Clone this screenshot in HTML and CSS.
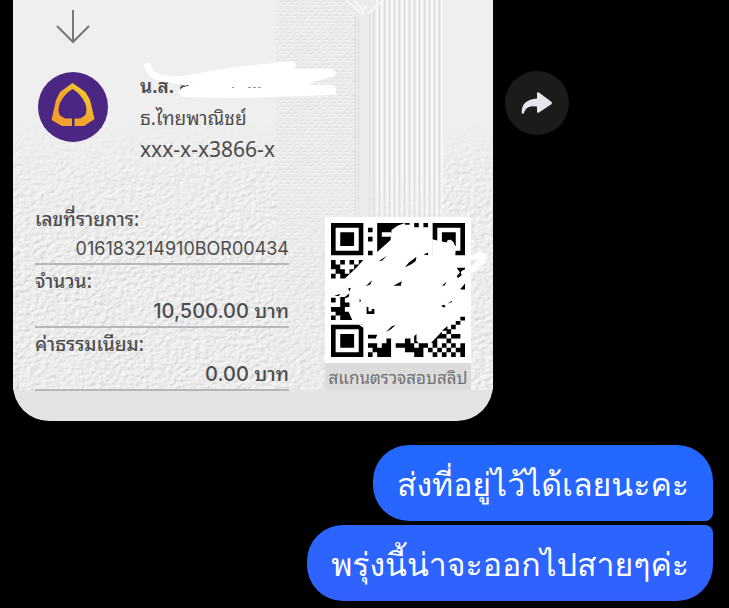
FILE: index.html
```html
<!DOCTYPE html>
<html lang="th">
<head>
<meta charset="utf-8">
<meta name="viewport" content="width=device-width, initial-scale=1">
<title>แชท</title>
<link rel="stylesheet" href="styles.css">
</head>
<body>
<main class="chat">
  <div class="received">
    <article class="slip">
      <svg class="texture" viewBox="0 0 480 390" preserveAspectRatio="none" aria-hidden="true">
        <defs>
          <filter id="relief" x="0" y="0" width="100%" height="100%" color-interpolation-filters="sRGB">
            <feTurbulence type="fractalNoise" baseFrequency="0.2 0.26" numOctaves="3" seed="8"/>
            <feColorMatrix values="0 0 0 0 0  0 0 0 0 0  0 0 0 0 0  1 0 0 0 0"/>
            <feDiffuseLighting surfaceScale="0.7" diffuseConstant="1.04" lighting-color="#efefef">
              <feDistantLight azimuth="225" elevation="72"/>
            </feDiffuseLighting>
          </filter>
          <linearGradient id="fade" x1="0" y1="0" x2="0" y2="1">
            <stop offset="0.31" stop-color="#000"/>
            <stop offset="0.45" stop-color="#bbb"/>
            <stop offset="0.65" stop-color="#fff"/>
          </linearGradient>
          <mask id="low"><rect width="480" height="390" fill="url(#fade)"/></mask>
          <linearGradient id="down" x1="0" y1="0" x2="0" y2="1">
            <stop offset="0.45" stop-color="#fff"/>
            <stop offset="0.65" stop-color="#777"/>
            <stop offset="1" stop-color="#222"/>
          </linearGradient>
          <mask id="high"><rect width="480" height="390" fill="url(#down)"/></mask>
          <pattern id="weave" width="7" height="7" patternUnits="userSpaceOnUse">
            <path d="M0 2l4-1M3 5l4-1" stroke="#dcdcdc"/><path d="M0 3l4-1M3 6l4-1" stroke="#f5f5f5"/>
          </pattern>
          <pattern id="ribs" width="5" height="9" patternUnits="userSpaceOnUse">
            <path d="M1.500 0v9" stroke="#dcdcdc"/><path d="M4 0v9" stroke="#f6f6f6" stroke-width="2"/>
          </pattern>
        </defs>
        <rect width="480" height="390" fill="#efefef"/>
        <rect width="480" height="390" filter="url(#relief)" mask="url(#low)"/>
        <g mask="url(#high)">
          <rect x="263" width="79" height="390" fill="#ebebeb"/>
          <rect x="263" width="79" height="390" fill="url(#weave)"/>
          <rect x="342" width="88" height="390" fill="#ebebeb"/>
          <rect x="362" width="68" height="390" fill="url(#ribs)"/>
          <path d="M342.500 17v373M345.500 20v370M356.500 15v375M360.500 10v380" stroke="#dcdcdc" fill="none"/>
          <path d="M333 0l16 14 5-10M341 0l8 9M370 0l-14 13" stroke="#f7f7f7" stroke-width="2" fill="none"/>
        </g>
      </svg>

      <div class="slip-body">
        <section class="payee">
          <div class="payee-marks">
            <svg class="arrow" viewBox="0 0 34 34" aria-hidden="true"><path d="M17 0v32M1 16l16 16 16-16"/></svg>
            <svg class="bank" viewBox="0 0 70 70" role="img" aria-label="ไทยพาณิชย์">
              <defs><linearGradient id="gold" x1="0" y1="1" x2="1" y2="0">
                <stop offset="0" stop-color="#f59d2f"/><stop offset="0.45" stop-color="#f3a52b"/><stop offset="0.75" stop-color="#f5c12b"/><stop offset="1" stop-color="#e3a51e"/>
              </linearGradient></defs>
              <circle cx="35" cy="35" r="35" fill="#4b2683"/>
              <path fill="url(#gold)" d="M34.500 11L22 20 18 28 13.500 48 24 54H34V46.500L27 46.500 22 43.500Q19 38 22 31 26 22 34.500 17 43 22 47 31 50 39 47 43.500L42 46.500 36.500 46.500V54H46L56.500 47 52 28 47.500 20Z"/>
            </svg>
          </div>
          <div class="payee-text">
            <p class="name">น.ส. ส</p>
            <p>ธ.ไทยพาณิชย์</p>
            <p class="account">xxx-x-x3866-x</p>
          </div>
        </section>
        <section class="details">
          <dl class="rows">
            <div class="row"><dt>เลขที่รายการ:</dt><dd class="ref">016183214910BOR00434</dd></div>
            <div class="row"><dt>จำนวน:</dt><dd>10,500.00 บาท</dd></div>
            <div class="row"><dt>ค่าธรรมเนียม:</dt><dd>0.00 บาท</dd></div>
          </dl>
          <figure class="qr">
            <svg viewBox="-1.300 -1.300 31.600 31.600" role="img" aria-label="คิวอาร์โค้ด">
              <rect x="-1.300" y="-1.300" width="31.600" height="31.600" fill="#fff"/>
              <path fill="none" stroke="#000" d="M.5.5h6v6h-6zM22.500.5h6v6h-6zM.5 22.500h6v6h-6z"/>
              <path d="M2 2h3v3h-3zM24 2h3v3h-3zM2 24h3v3h-3z"/>
              <path fill="#fff" d="M21.900 3.500L23 3.800 25 4.200 25.300 3.700 25.900 3.600 26.500 4.100 27 5.300 26.900 7.200H21.900ZM6 22l1.200 0v.8z"/>
              <!-- upper modules -->
              <path fill-rule="evenodd" d="M8 1h1v1h-1zM8 3h1v1h-1zM8 6h1v1h-1zM10 0h6l-1.600.6-1.300.9-.2 2.200-2.900 2.600zM11 2h2v1h-2zM16 0h1v.4h-1zM18 0h1v.9h-1zM20 0h1v.9h-1z"/>
              <path d="M0 8h1v1h1v1h1v1h1v-1h1v-1h1v-1h1l-1.500 1.700-2.500 2.300h-1v-1h-1v-1h-1zM2 8h1v1h-1zM4 8h1v1h-1zM0 11h1v1h-1z
                M10.300 8.300l1.800-1.200-1 1zM16 9.600l.8-1 1.700-1.300-.2 1-1 .7zM20 6.800l1-.4v.6z
                M7.500 13.700l1.400-1.300-.4.9zM13.500 13.600l1.800-1-.2 1zM24 13.600l1-.9-.4.800z
                M27.200 9.700h1.800v1l-1.500 1.200-.3-.4.700-.8zM28 14.300l1-1.200v1.300h-1z"/>
              <!-- middle modules -->
              <path d="M.7 15.800l1.300-.5-.3.500zM0 16.200h1v1h-1zM3.700 14.200l.6-.2-.3.800zM2 16h1l1-.8-.2.800-.8.3v.9h1v1h-1v1h.8l.8 1.800h-1.600v-.8h-1v-1h-1v-1h1zM0 18.200h1v1h-1zM2 20h1v1h-1zM0 20h1v1h-1zM1 19h1v1h-1zM6.200 16.400l.3.400-.3.400z
                M7.700 18.200h.4v.9h.7v-.5h.6v1.100h-1.700zM23.800 17.900l.7-.2.300.4-.4.200zM25.200 17.500l1-.7v.3zM16.500 21l.9-.4zM11.900 23.600l1.200-1.200.9-.4-1 1z"/>
              <!-- lower modules -->
              <path d="M8 24.200h2l-.3.800h-1.700zM8 26h2v1h1v-1h1v-1h1v4h-3v-1h-1v-1h-1zM8 28h1v1h-1z
                M14 26h4v1h-4zM16 25h1.200v1h-1.200zM18 24.500l.5-.5v1.500l.5.5h-1zM16 27h1v1h-1zM17 27h3v1h-3zM18 28h2v1h-2zM19 26h2v1h-2zM21 27h1v1h-1z
                M22 26h1v1h-1zM21.700 25.900l2.300-2.400v1.500h-1v1h-1zM23 27h1v1h-1zM22 28h1v1h-1z
                M28 20.300h1v.8h-1zM27 21.200h1v.8h-1zM26 22h1v1h-1zM25 23h1v1h-1zM24 23.300l1.200-1v1h-1.200z
                M24 24h1v1h-1zM26 24h2v1h-2zM25 25h1v1h-1zM24 26h1v1h-1zM26 26h1v1h-1zM28 26h1v3h-1zM27 27h1v1h-1zM25 27h1v1h-1zM24 28h1v1h-1zM26 28h1v1h-1z"/>
            </svg>
            <figcaption>สแกนตรวจสอบสลิป</figcaption>
          </figure>
        </section>
      </div>
      <svg class="scribble" viewBox="0 0 480 390" aria-hidden="true">
        <path fill="#fff" d="M131 66Q131 62 135 63 138 64 141 71 145 76 169 76L222 67 279 61Q285 63 281 69L318 69Q326 71 320 77L300 82 296 85H319Q326 88 322 95L222 98 169 97Q164 94 166 91 169 86 179 85.500L165 84 145 81Q135 78 131 66Z"/>
        <path stroke="#999" stroke-dasharray="3 2" d="M235 87.500h13M219 87.500h2" fill="none"/>
        <path fill="none" stroke="#fff" stroke-width="6" stroke-linecap="round" stroke-linejoin="round" d="M450 260l19-5q4 1 0 6l-8 8-10 4"/>
      </svg>
    </article>
    <button class="share" type="button" aria-label="ส่งต่อ">
      <svg viewBox="0 0 32 24" aria-hidden="true"><path d="M16 2.500Q16 .6 18 1.600L30 10.500Q32 12 30 13.500L18 21.500Q16 22.500 16 20.500V15.500Q6 14 3.500 20.500 3 23.500.8 22.500-.4 9 16 7.500Z"/></svg>
    </button>
  </div>
  <div class="sent">
    <p class="bubble first">ส่งที่อยู่ไว้ได้เลยนะคะ</p>
    <p class="bubble last">พรุ่งนี้น่าจะออกไปสายๆค่ะ</p>
  </div>
</main>
</body>
</html>
```
FILE: styles.css
```css
* { box-sizing: border-box; }

body {
  margin: 0;
  background: #000;
  color: #4c4c4e;
  font-family: "Noto Sans Thai Looped", "Noto Sans", "Liberation Sans", sans-serif;
}

p, dl, dd, figure { margin: 0; }

.chat { padding: 0 16px 7px 13px; }

.received {
  display: flex;
  align-items: flex-start;
  gap: 12px;
}

.slip {
  position: relative;
  flex: 0 1 480px;
  padding-bottom: 30px;
  overflow: hidden;
  background: #e4e4e4;
  border-radius: 0 0 36px 36px;
}

.texture, .scribble {
  position: absolute;
  top: 0;
  left: 0;
  width: 100%;
  height: 390px;
}

.slip-body {
  position: relative;
  padding: 10px 22px 0;
}

.payee {
  display: flex;
  gap: 32px;
  padding-left: 3px;
}

.payee-marks {
  display: flex;
  flex-direction: column;
  align-items: center;
  gap: 28px;
}

.arrow {
  width: 34px;
  height: 34px;
  fill: none;
  stroke: #777;
  stroke-width: 2;
}

.bank { width: 70px; height: 70px; }

.payee-text {
  padding-top: 59px;
  font-size: 19px;
  line-height: 32px;
}

.name { font-weight: 600; }

.account { font-family: "Noto Sans", sans-serif; font-size: 21px; }

.details {
  display: flex;
  justify-content: space-between;
  align-items: flex-start;
  padding-top: 38px;
}

.rows { flex: 0 1 254px; }

.row {
  border-bottom: 2px solid #b7b7b7;
  font-size: 19px;
  line-height: 30px;
  height: 63px;
}

.row:first-child { height: 62px; }

.row dt { font-weight: 500; }

.row dd {
  font-family: Inter, "Noto Sans Thai Looped", sans-serif;
  font-size: 20px;
  font-weight: 500;
  line-height: 32px;
  text-align: right;
}

.row .ref { font-size: 18px; font-weight: 400; }

.qr { width: 146px; padding-top: 14px; }

.qr svg { display: block; width: 146px; height: 146px; }

.qr figcaption {
  background: #dcdcdc;
  color: #717171;
  font-size: 17px;
  line-height: 27px;
  text-align: center;
  white-space: nowrap;
}

.share {
  display: flex;
  align-items: center;
  justify-content: center;
  width: 64px;
  height: 64px;
  margin-top: 71px;
  padding: 0;
  border: 0;
  border-radius: 50%;
  background: #1b1b1c;
}

.share svg { width: 32px; height: 24px; fill: #e4e6eb; }

.sent {
  display: flex;
  flex-direction: column;
  align-items: flex-end;
  gap: 4px;
  padding-top: 24px;
}

.bubble {
  padding: 12px 24px 8px;
  color: #fff;
  font-family: Loma, "Liberation Sans", sans-serif;
  font-size: 32px;
  line-height: 56px;
  white-space: nowrap;
}

.first {
  background: linear-gradient(#2268ff, #2a65ff);
  border-radius: 36px 36px 8px 36px;
}

.last {
  background: linear-gradient(#2b65ff, #3161ff);
  border-radius: 36px 8px 36px 36px;
}
```
